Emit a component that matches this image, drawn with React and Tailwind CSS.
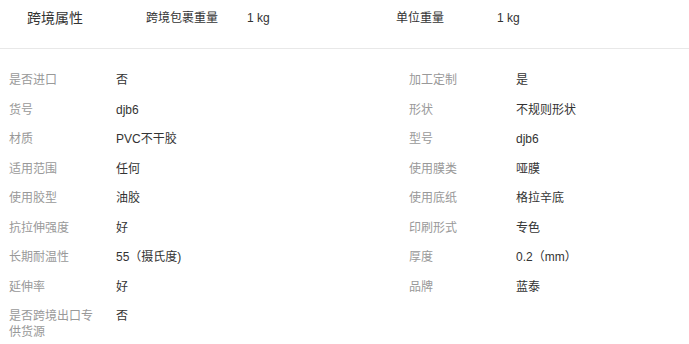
const font = { fontFamily: '"Liberation Sans", Arial, "Noto Sans CJK SC", sans-serif' };

const ROWS = [
  ['是否进口', '否', '加工定制', '是'],
  ['货号', 'djb6', '形状', '不规则形状'],
  ['材质', 'PVC不干胶', '型号', 'djb6'],
  ['适用范围', '任何', '使用膜类', '哑膜'],
  ['使用胶型', '油胶', '使用底纸', '格拉辛底'],
  ['抗拉伸强度', '好', '印刷形式', '专色'],
  ['长期耐温性', '55（摄氏度)', '厚度', '0.2（mm）'],
  ['延伸率', '好', '品牌', '蓝泰'],
  ['是否跨境出口专供货源', '否', null, null],
];

function Cell({ label, value }) {
  if (!label) return <div />;
  return (
    <div className="flex py-[7px] leading-[15.5px]">
      <div className="w-[90px] text-[#999]">{label}</div>
      <div className="ml-[17px] text-[#333]">{value}</div>
    </div>
  );
}

export default function App() {
  return (
    <div className="w-[689px] h-[344px] bg-white overflow-hidden text-[12px]" style={font}>
      <div className="h-[49px] flex items-start pt-[10px] border-b border-[#e8e8e8]">
        <div className="ml-[27px] w-[119px] text-[14px] text-[#333] leading-[16px]">跨境属性</div>
        <div className="flex items-center h-[16px] text-[#333]">
          <span className="w-[101px]">跨境包裹重量</span>
          <span className="w-[149px]">1 kg</span>
          <span className="w-[101px]">单位重量</span>
          <span>1 kg</span>
        </div>
      </div>
      <div className="pt-[17px] pl-[9px] grid grid-cols-[400px_1fr]">
        {ROWS.map((r, i) => [
          <Cell key={i + 'a'} label={r[0]} value={r[1]} />,
          <Cell key={i + 'b'} label={r[2]} value={r[3]} />,
        ])}
      </div>
    </div>
  );
}
